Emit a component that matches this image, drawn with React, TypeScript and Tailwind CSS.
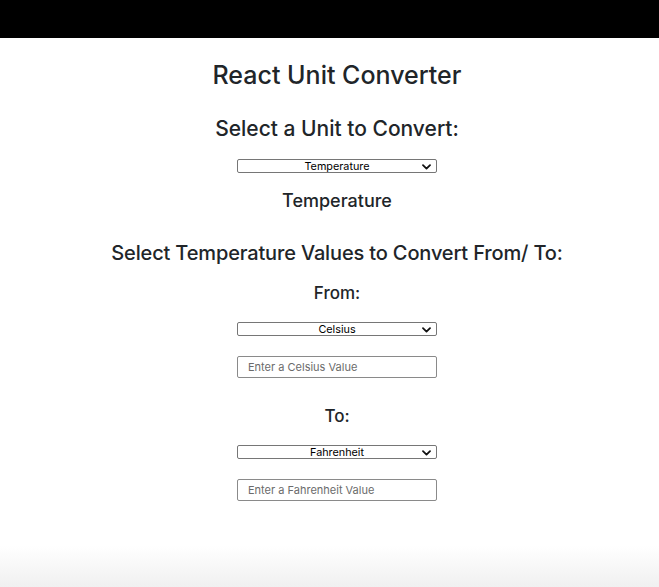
import React from "react";

const Chevron = () => (
  <svg width="9" height="6" viewBox="0 0 9 6" className="absolute right-[5px] top-[4px]">
    <path d="M1 1.2 L4.5 4.6 L8 1.2" fill="none" stroke="#111" strokeWidth="1.8" strokeLinecap="round" strokeLinejoin="round" />
  </svg>
);

const FakeSelect = ({ value, className }: { value: string; className?: string }) => (
  <div className={`relative w-[200px] h-[14px] border border-[#767676] rounded-[2px] bg-white flex items-center justify-center ${className ?? ""}`}>
    <span className="text-[10.8px] leading-none text-black pt-[2px]">{value}</span>
    <Chevron />
  </div>
);

const FakeInput = ({ placeholder, className }: { placeholder: string; className?: string }) => (
  <input
    placeholder={placeholder}
    className={`w-[200px] h-[22px] border border-[#8a8a8a] rounded-[2px] px-[10px] text-[11px] text-black placeholder:text-[#6b6b6b] outline-none ${className ?? ""}`}
  />
);

export default function App() {
  return (
    <div className="w-[659px] h-[587px] flex flex-col text-[#212529] font-['Inter','Liberation_Sans',sans-serif] bg-gradient-to-b from-white from-[93%] to-[#f0f0f0]">
      <div className="h-[38px] bg-black shrink-0" />
      <div className="flex flex-col items-center pl-[15px]">
        <h1 className="mt-[22px] text-[25px] leading-[30px] font-medium">React Unit Converter</h1>
        <h2 className="mt-[26px] text-[21px] leading-[25px] font-medium">Select a Unit to Convert:</h2>
        <FakeSelect value="Temperature" className="mt-[18px]" />
        <h3 className="mt-[17px] text-[18px] leading-[22px] font-medium">Temperature</h3>
        <h2 className="mt-[29px] text-[20px] leading-[24px] font-medium tracking-[-0.15px]">Select Temperature Values to Convert From/ To:</h2>
        <h3 className="mt-[18px] text-[17px] leading-[20px] font-medium">From:</h3>
        <FakeSelect value="Celsius" className="mt-[19px]" />
        <FakeInput placeholder="Enter a Celsius Value" className="mt-[20px]" />
        <h3 className="mt-[28px] text-[17px] leading-[20px] font-medium">To:</h3>
        <FakeSelect value="Fahrenheit" className="mt-[19px]" />
        <FakeInput placeholder="Enter a Fahrenheit Value" className="mt-[20px]" />
      </div>
    </div>
  );
}
